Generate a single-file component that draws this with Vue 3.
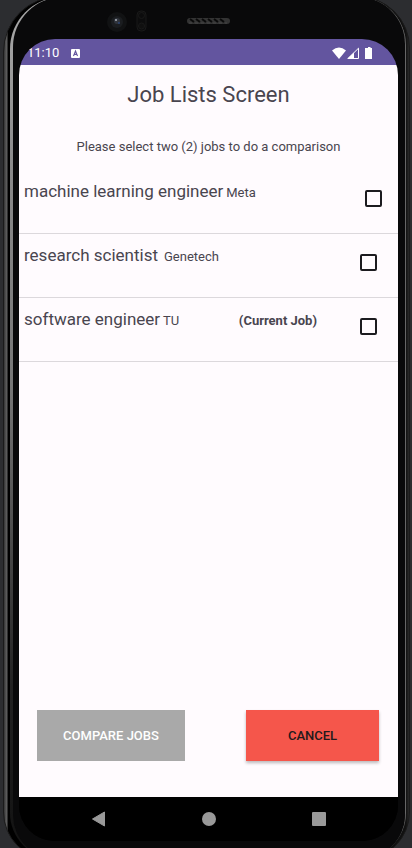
<script setup>
import { ref } from 'vue'

const jobs = ref([
  { id: 'ml', title: 'machine learning engineer', company: 'Meta', current: false, selected: false },
  { id: 'rs', title: 'research scientist', company: 'Genetech', current: false, selected: false },
  { id: 'se', title: 'software engineer', company: 'TU', current: true, selected: false },
])
</script>

<template>
  <div class="desk">
    <div class="shell">
      <div class="rim">
        <div class="bezel">
          <div class="hardware" aria-hidden="true">
            <svg class="hardware-art" viewBox="0 0 379 39">
              <circle cx="98" cy="22" r="10" fill="#111213" />
              <circle cx="98" cy="22" r="6" fill="#1b1d20" />
              <circle cx="98" cy="21" r="3" fill="#30343c" />
              <circle cx="97" cy="20" r="1" fill="#aab0ba" />
              <circle cx="100" cy="23" r="1" fill="#2c4674" />
              <rect x="118" y="11" width="9" height="20" rx="4" fill="#0c0c0d" stroke="#191919" />
              <circle cx="122.500" cy="15.500" r="3" fill="none" stroke="#191919" />
              <circle cx="122.500" cy="26" r="3" fill="#101010" stroke="#191919" />
              <rect x="168" y="18" width="43" height="6" rx="3" fill="#333" />
              <path d="M171 19l4 3M177 19l4 3M183 19l4 3M189 19l4 3M195 19l4 3M201 19l4 3" stroke="#0a0a0a" stroke-width="2" />
              <path d="M170 23h38" stroke="#444" stroke-dasharray="3 3" />
            </svg>
          </div>

          <div class="screen">
            <header class="status">
              <span class="clock">11:10</span>
              <svg class="keyboard" viewBox="0 0 9 9" aria-hidden="true">
                <rect width="9" height="9" rx="1" fill="#fff" />
                <path d="M2.500 7L4.500 2L6.500 7M3.200 5.400H5.800" fill="none" stroke="#63559f" stroke-width="1.100" />
              </svg>
              <svg class="signals" viewBox="0 0 41 13" aria-hidden="true">
                <path d="M0 3.500Q7 -2.500 14 3.500L7 12Z" fill="#fff" />
                <path d="M16 11.500L26.500 1.200V11.500Z" fill="none" stroke="#fff" />
                <path d="M15 12L22 5.500V12Z" fill="#fff" />
                <path d="M34.500 1H36V0H38.500V1H40V12H33V1Z" fill="#fff" />
              </svg>
            </header>

            <main class="content">
              <h1>Job Lists Screen</h1>
              <p class="hint">Please select two (2) jobs to do a comparison</p>

              <ul class="jobs">
                <li v-for="job in jobs" :key="job.id" :class="{ first: job.id === 'ml' }">
                  <label :for="job.id">
                    <span class="title">{{ job.title }}</span>
                    <span class="company" :class="{ spaced: job.id === 'rs' }">{{ job.company }}</span>
                    <strong v-if="job.current">(Current Job)</strong>
                  </label>
                  <input :id="job.id" v-model="job.selected" type="checkbox" />
                </li>
              </ul>

              <div class="actions">
                <button class="compare" type="button">COMPARE JOBS</button>
                <button class="cancel" type="button">CANCEL</button>
              </div>
            </main>

            <nav class="system" aria-label="System navigation">
              <button type="button" aria-label="Back">
                <svg viewBox="0 0 16 16"><path d="M1.500 8L13.500 1V15Z" fill="#999" stroke="#999" stroke-linejoin="round" /></svg>
              </button>
              <button type="button" aria-label="Home">
                <svg viewBox="0 0 16 16"><circle cx="8" cy="8" r="7" fill="#999" /></svg>
              </button>
              <button type="button" aria-label="Overview">
                <svg viewBox="0 0 16 16"><rect x="1" y="1" width="14" height="14" rx="1" fill="#999" /></svg>
              </button>
            </nav>
          </div>
        </div>
      </div>
    </div>
  </div>
</template>

<style>
body {
  margin: 0;
  background: #2c2d30;
}
</style>

<style scoped>
* {
  box-sizing: border-box;
}

.desk {
  height: 100vh;
  padding: 0 2px 0 3px;
  overflow: hidden;
  background: #2c2d30;
  font-family: Roboto, "Noto Sans", sans-serif;
  color: #49454f;
}

.shell {
  height: calc(100vh + 16px);
  margin-top: -4px;
  padding: 0 3px 0 6px;
  border: 1px solid #1a1a1a;
  border-radius: 56px 52px 48px 48px;
  background: linear-gradient(90deg, #333 0, #555 2px, #606060 3px, #000 4px, #000 50%, #111 calc(100% - 3px), #2a2a2a);
}

.rim {
  height: 100%;
  padding: 0 0 0 3px;
  border-right: 1px solid #666;
  border-radius: 52px 48px 46px 46px;
  background: linear-gradient(180deg, #aaa 0, #8a8a8a 20%, #777 45%, #222 80%, #111);
}

.bezel {
  display: flex;
  flex-direction: column;
  height: 100%;
  padding: 3px 7px 18px 6px;
  border-radius: 50px 47px 44px 44px;
  background: #09090a;
}

.hardware {
  height: 39px;
  flex: none;
}

.hardware-art {
  display: block;
  width: 100%;
  height: 39px;
}

.screen {
  display: flex;
  flex: 1;
  flex-direction: column;
  overflow: hidden;
  border-radius: 36px;
  background: #000;
}

.status {
  display: flex;
  flex: none;
  align-items: center;
  height: 26px;
  padding: 2px 25px 0 8px;
  background: #63559f;
  color: #fff;
}

.clock {
  font-size: 13px;
  line-height: 24px;
}

.keyboard {
  width: 9px;
  height: 9px;
  margin-left: 12px;
}

.signals {
  width: 41px;
  height: 13px;
  margin-left: auto;
}

.content {
  display: flex;
  flex: 1;
  flex-direction: column;
  background: #fffbfe;
}

h1 {
  margin: 14px 0 0;
  font-size: 22px;
  font-weight: 400;
  line-height: 32px;
  text-align: center;
}

.hint {
  margin: 28px 0 0;
  font-size: 13px;
  line-height: 16px;
  text-align: center;
}

.jobs {
  margin: 15px 0 0;
  padding: 0;
  list-style: none;
}

li {
  display: flex;
  justify-content: space-between;
  height: 64px;
  padding: 9px 21px 0 5px;
  border-bottom: 1px solid #dcd8dc;
}

li.first {
  padding-right: 16px;
}

label {
  display: flex;
  flex: 1;
  align-items: baseline;
  gap: 3px;
  height: 24px;
  line-height: 24px;
}

.title {
  font-size: 17px;
}

.company {
  font-size: 13px;
}

.company.spaced {
  margin-left: 3px;
}

strong {
  margin: 0 43px 0 auto;
  font-size: 13px;
  font-weight: 700;
}

input {
  width: 17px;
  height: 17px;
  margin: 11px 0 0;
  appearance: none;
  border: 2px solid #1c1b1f;
  border-radius: 2px;
  background: #fffbfe;
}

input:checked {
  background: #63559f;
}

.actions {
  display: flex;
  justify-content: space-between;
  margin-top: auto;
  padding: 0 19px 36px 18px;
}

.actions button {
  height: 51px;
  padding: 0;
  border: 0;
  font: 500 13px/16px Roboto, "Noto Sans", sans-serif;
}

.compare {
  flex: 0 1 148px;
  background: #a9a9a9;
  color: #fff;
}

.cancel {
  flex: 0 1 133px;
  background: #f5564b;
  color: #231a1c;
  box-shadow: 0 2px 3px #0004;
}

.system {
  display: flex;
  flex: none;
  align-items: center;
  justify-content: center;
  gap: 94px;
  height: 44px;
  background: #000;
}

.system button {
  width: 16px;
  height: 16px;
  padding: 0;
  border: 0;
  background: none;
}

.system svg {
  display: block;
  width: 16px;
  height: 16px;
}
</style>
